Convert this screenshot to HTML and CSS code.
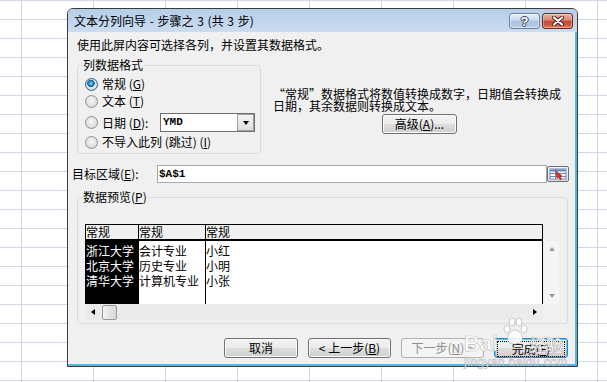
FILE: index.html
```html
<!DOCTYPE html>
<html lang="zh-CN">
<head>
    <meta charset="UTF-8">
    <meta name="viewport" content="width=device-width, initial-scale=1.0">
    <title>文本分列向导 - 步骤之 3</title>
    <link rel="stylesheet" href="styles.css">
</head>
<body>
    <div class="dialog">
        <div class="titlebar">
            <span class="title">文本分列向导 - 步骤之 3 (共 3 步)</span>
            <div class="caption-buttons">
                <span class="cap-btn help">?</span>
                <span class="cap-btn close">
                    <svg width="14" height="10" viewBox="0 0 14 10">
                        <path d="M3 1.5 L11 8.5 M11 1.5 L3 8.5" stroke="#4a1a12" stroke-width="4" stroke-linecap="round"/>
                        <path d="M3 1.5 L11 8.5 M11 1.5 L3 8.5" stroke="#fff" stroke-width="2.2" stroke-linecap="round"/>
                    </svg>
                </span>
            </div>
        </div>
        <div class="client">
            <p class="intro">使用此屏内容可选择各列，并设置其数据格式。</p>

            <div class="format-row">
                <div class="group format-group">
                    <span class="group-title">列数据格式</span>
                    <div class="radio-list">
                        <div class="radio-row"><span class="radio checked"></span><span>常规 (<u>G</u>)</span></div>
                        <div class="radio-row"><span class="radio"></span><span>文本 (<u>T</u>)</span></div>
                        <div class="radio-row date">
                            <span class="radio"></span>
                            <span class="date-label">日期 (<u>D</u>):</span>
                            <div class="combo">
                                <span class="combo-value">YMD</span>
                                <span class="combo-btn"><i class="tri-down"></i></span>
                            </div>
                        </div>
                        <div class="radio-row skip"><span class="radio"></span><span>不导入此列 (跳过) (<u>I</u>)</span></div>
                    </div>
                </div>
                <div class="format-info">
                    <p>“常规”数据格式将数值转换成数字，日期值会转换成<br>日期，其余数据则转换成文本。</p>
                    <button class="btn advanced">高级(<u>A</u>)...</button>
                </div>
            </div>

            <div class="dest-row">
                <span class="dest-label">目标区域(<u>E</u>):</span>
                <span class="dest-input">$A$1</span>
                <span class="ref-btn">
                    <svg width="18" height="12" viewBox="0 0 18 12">
                        <rect x="1" y="1" width="16" height="10" fill="#fff" stroke="#6d87b5"/>
                        <rect x="1.5" y="1.5" width="15" height="2" fill="#5b86c8"/>
                        <path d="M1 5.5 H17 M1 8.5 H17 M6.5 1 V11" stroke="#6d87b5"/>
                        <path d="M7 3 L13 8 L11 8.5 L12.5 11 L11 11.5 L9.5 9 L8 10 Z" fill="#e0301e" stroke="#9a1a0c" stroke-width="0.6"/>
                    </svg>
                </span>
            </div>

            <div class="group preview-group">
                <span class="group-title">数据预览(<u>P</u>)</span>
                <div class="preview">
                    <div class="grid-head">
                        <span class="c1">常规</span>
                        <span class="c2">常规</span>
                        <span class="c3">常规</span>
                    </div>
                    <div class="grid-body">
                        <div class="c1 selected">浙江大学<br>北京大学<br>清华大学</div>
                        <div class="c2">会计专业<br>历史专业<br>计算机专业</div>
                        <div class="c3">小红<br>小明<br>小张</div>
                    </div>
                    <div class="vscroll">
                        <i class="tri-up gray"></i>
                        <i class="tri-down gray"></i>
                    </div>
                    <div class="hscroll">
                        <span class="arrow-box"><i class="tri-left"></i></span>
                        <span class="thumb"></span>
                        <span class="spacer"></span>
                        <span class="arrow-box"><i class="tri-right"></i></span>
                    </div>
                </div>
            </div>

            <div class="buttons">
                <button class="btn cancel">取消</button>
                <button class="btn back">&lt; 上一步(<u>B</u>)</button>
                <button class="btn next" disabled>下一步(<u>N</u>) &gt;</button>
                <button class="btn finish"><span class="focus">完成(<u>F</u>)</span></button>
            </div>
        </div>
    </div>

    <div class="watermark">
        <div class="wm-top">
            <span class="wm-bai">Bai</span>
            <svg class="wm-paw" width="26" height="30" viewBox="0 0 26 30">
                <ellipse cx="5" cy="12" rx="3" ry="4" />
                <ellipse cx="10" cy="5" rx="3" ry="4" />
                <ellipse cx="17" cy="5" rx="3" ry="4" />
                <ellipse cx="22" cy="12" rx="3" ry="4" />
                <path d="M13 13 C8 13 4 20 6 24 C8 28 18 28 20 24 C22 20 18 13 13 13 Z" />
            </svg>
            <span class="wm-jy">经验</span>
        </div>
        <div class="wm-url">jingyan.baidu.com</div>
    </div>
</body>
</html>
```

FILE: styles.css
```css
body {
    margin: 0;
    height: 382px;
    overflow: hidden;
    position: relative;
    font-family: "Noto Sans CJK SC", sans-serif;
    font-size: 12px;
    color: #000;
    background-color: #fff;
    background-image:
        linear-gradient(to right, #d0d7e5 1px, transparent 1px),
        linear-gradient(to bottom, #d0d7e5 1px, transparent 1px);
    background-size: 72px 19px;
    background-position: 21px 0;
}

u {
    text-decoration: underline;
}

/* dialog frame */

.dialog {
    width: 511px;
    height: 359px;
    margin: 8px 0 0 67px;
    box-sizing: border-box;
    border: 1px solid #3b3b3b;
    border-radius: 6px 6px 0 0;
    background: #f0f0f0;
    display: flex;
    flex-direction: column;
    overflow: hidden;
}

.titlebar {
    flex: none;
    height: 23px;
    display: flex;
    align-items: center;
    padding-left: 6px;
    background: linear-gradient(#b6cde8, #c2d6ee 60%, #cbdcf0);
}

.title {
    line-height: 14px;
    word-spacing: 1px;
}

.caption-buttons {
    margin-left: auto;
    margin-right: 4px;
    align-self: flex-start;
    margin-top: 4px;
    display: flex;
    gap: 2px;
}

.cap-btn {
    width: 31px;
    height: 16px;
    box-sizing: border-box;
    border-radius: 3px;
    display: flex;
    align-items: center;
    justify-content: center;
}

.cap-btn.help {
    border: 1px solid #6b7f99;
    background: linear-gradient(#e4edf8, #c8d9ee 45%, #a9c1e0 50%, #b9cde8);
    box-shadow: inset 0 0 0 1px rgba(255, 255, 255, 0.5);
    color: #fff;
    font: bold 13px "Liberation Sans", sans-serif;
    text-shadow: 1px 0 0 #33465f, -1px 0 0 #33465f, 0 1px 0 #33465f, 0 -1px 0 #33465f;
}

.cap-btn.close {
    border: 1px solid #6a2a1f;
    background: linear-gradient(#ebb3a5, #d98570 45%, #c5452c 50%, #cf5a3e 80%, #e08b6c);
    box-shadow: inset 0 0 0 1px rgba(255, 255, 255, 0.35);
}

.client {
    flex: 1;
    border-right: 2px solid #55b8e4;
    border-bottom: 2px solid #55b8e4;
}

.intro {
    margin: 6px 0 0 9px;
    line-height: 14px;
}

/* group boxes */

.group {
    border: 1px solid #d5dfe5;
    border-radius: 3px;
    box-sizing: border-box;
}

.group-title {
    display: block;
    width: max-content;
    margin: -8px 0 0 -3px;
    padding: 0 1px;
    line-height: 14px;
    background: #f0f0f0;
}

.format-row {
    display: flex;
    align-items: flex-start;
    margin-top: 13px;
}

.format-group {
    margin-left: 9px;
    width: 184px;
    height: 89px;
    padding-left: 7px;
}

.radio-list {
    margin-top: 4px;
}

.radio-row {
    display: flex;
    align-items: center;
    gap: 4px;
    height: 16px;
    line-height: 14px;
}

.radio-row + .radio-row {
    margin-top: 1px;
}

.radio-row.date {
    height: 19px;
    margin-top: 4px;
}

.radio-row.skip {
    margin-top: 2px;
}

.radio {
    flex: none;
    width: 13px;
    height: 13px;
    box-sizing: border-box;
    border-radius: 50%;
    border: 1px solid #8e8f8f;
    background: radial-gradient(circle at 50% 40%, #f6f6f6 0, #e2e2e2 55%, #c9c9c9 100%);
}

.radio.checked {
    border-color: #2c628b;
    background:
        radial-gradient(circle at 45% 40%, #9be4ff 0, #35a2dd 1.5px, #1a5b8c 3.5px, transparent 4px),
        radial-gradient(circle at 50% 40%, #f6f6f6 0, #e2e2e2 55%, #c9c9c9 100%);
}

.date-label {
    width: 54px;
}

.combo {
    width: 95px;
    height: 19px;
    box-sizing: border-box;
    border: 1px solid #6f6f6f;
    background: #fff;
    display: flex;
}

.combo-value {
    flex: 1;
    padding-left: 2px;
    font: bold 11px/17px "Liberation Mono", monospace;
}

.combo-btn {
    width: 17px;
    box-sizing: border-box;
    border: 1px solid #a0a0a0;
    background: linear-gradient(#f4f4f4, #dedede);
    display: flex;
    align-items: center;
    justify-content: center;
}

.format-info {
    margin-left: 12px;
    padding-top: 23px;
    white-space: nowrap;
}

.format-info p {
    margin: 0;
    line-height: 12px;
}

/* triangles */

.tri-down,
.tri-up,
.tri-left,
.tri-right {
    display: block;
    width: 0;
    height: 0;
    border-style: solid;
    border-color: transparent;
}

.tri-down {
    border-width: 4px 3.5px 0 3.5px;
    border-top-color: #000;
}

.tri-up {
    border-width: 0 3.5px 4px 3.5px;
    border-bottom-color: #000;
}

.tri-left {
    border-width: 3.5px 4px 3.5px 0;
    border-right-color: #000;
}

.tri-right {
    border-width: 3.5px 0 3.5px 4px;
    border-left-color: #000;
}

.tri-up.gray {
    border-bottom-color: #9a9a9a;
}

.tri-down.gray {
    border-top-color: #9a9a9a;
}

/* buttons */

.btn {
    height: 20px;
    padding: 0;
    box-sizing: border-box;
    border: 1px solid #707070;
    border-radius: 3px;
    background: linear-gradient(#f2f2f2, #ebebeb 48%, #dddddd 52%, #cfcfcf);
    box-shadow: inset 0 0 0 1px #fbfbfb;
    font: 12px/18px "Noto Sans CJK SC", sans-serif;
    color: #000;
    cursor: pointer;
}

.btn.advanced {
    display: block;
    width: 75px;
    margin: 2px 0 0 109px;
}

.btn:disabled {
    border-color: #adb2b5;
    background: #f4f4f4;
    box-shadow: none;
    color: #8d8d8d;
}

.btn.finish {
    border-color: #3c7fb1;
    box-shadow: inset 0 0 0 1px #48d1fa;
    padding: 2px;
}

.btn.finish .focus {
    display: block;
    height: 14px;
    line-height: 14px;
    border: 1px dotted #000;
}

/* target range */

.dest-row {
    display: flex;
    align-items: center;
    height: 18px;
    margin-top: 11px;
}

.dest-label {
    width: 85px;
    margin-left: 4px;
    line-height: 14px;
}

.dest-input {
    width: 390px;
    height: 18px;
    box-sizing: border-box;
    border: 1px solid #a3a9b1;
    background: #fff;
    padding-left: 1px;
    font: bold 11px/16px "Liberation Mono", monospace;
}

.ref-btn {
    width: 22px;
    height: 16px;
    box-sizing: border-box;
    border: 1px solid #6f6f6f;
    border-radius: 2px;
    background: linear-gradient(#f6f6f6, #dcdcdc);
    display: flex;
    align-items: center;
    justify-content: center;
}

/* data preview */

.preview-group {
    margin: 14px 0 0 9px;
    width: 491px;
    height: 127px;
    padding-left: 7px;
}

.preview {
    margin-top: 20px;
    display: grid;
    grid-template-columns: 458px 16px;
    grid-template-rows: 17px 63px 16px;
}

.grid-head,
.grid-body {
    grid-column: 1;
    display: flex;
    box-sizing: border-box;
    line-height: 14px;
}

.grid-head {
    grid-row: 1;
    border: 1px solid #000;
    border-bottom-width: 2px;
    background: #f0f0f0;
}

.grid-body {
    grid-row: 2;
    border-left: 1px solid #000;
    border-right: 1px solid #000;
    background: #fff;
    line-height: 15px;
}

.grid-body > div {
    padding-top: 2px;
    white-space: nowrap;
}

.c1 {
    width: 52px;
    border-right: 1px solid #000;
}

.c2 {
    width: 66px;
    border-right: 1px solid #000;
}

.c3 {
    flex: 1;
}

.c1.selected {
    background: #000;
    color: #fff;
}

.vscroll {
    grid-column: 2;
    grid-row: 2;
    margin-left: 1px;
    background: #f5f5f5;
    display: flex;
    flex-direction: column;
    justify-content: space-between;
    align-items: center;
    padding: 6px 0;
    box-sizing: border-box;
}

.hscroll {
    grid-column: 1;
    grid-row: 3;
    display: flex;
    align-items: center;
    background: #ebebeb;
}

.arrow-box {
    width: 16px;
    height: 16px;
    display: flex;
    align-items: center;
    justify-content: center;
}

.thumb {
    width: 15px;
    height: 15px;
    margin-left: 1px;
    box-sizing: border-box;
    border: 1px solid #989898;
    border-radius: 2px;
    background: linear-gradient(to right, #f4f4f4, #e4e4e4 50%, #d8d8d8);
}

.spacer {
    flex: 1;
}

.buttons {
    display: flex;
    gap: 10px;
    margin-top: 14px;
    padding-left: 156px;
}

.btn.cancel,
.btn.finish {
    width: 74px;
}

.btn.back,
.btn.next {
    width: 83px;
}

/* baidu watermark */

.watermark {
    position: absolute;
    left: 464px;
    top: 315px;
    color: rgba(255, 255, 255, 0.85);
    -webkit-text-stroke: 0.6px rgba(140, 140, 140, 0.55);
    pointer-events: none;
}

.wm-top {
    display: flex;
    align-items: flex-end;
    height: 38px;
}

.wm-bai {
    font: bold 22px/24px "Liberation Sans", sans-serif;
    margin-bottom: -3px;
}

.wm-paw {
    margin: 0 1px 6px 4px;
    fill: rgba(255, 255, 255, 0.85);
    stroke: rgba(140, 140, 140, 0.55);
    stroke-width: 0.8;
}

.wm-jy {
    font: bold 17px/20px "Noto Sans CJK SC", sans-serif;
    margin-bottom: -2px;
}

.wm-url {
    font: 12px/14px "Liberation Sans", sans-serif;
    letter-spacing: 0.4px;
    margin-top: 2px;
}
```
